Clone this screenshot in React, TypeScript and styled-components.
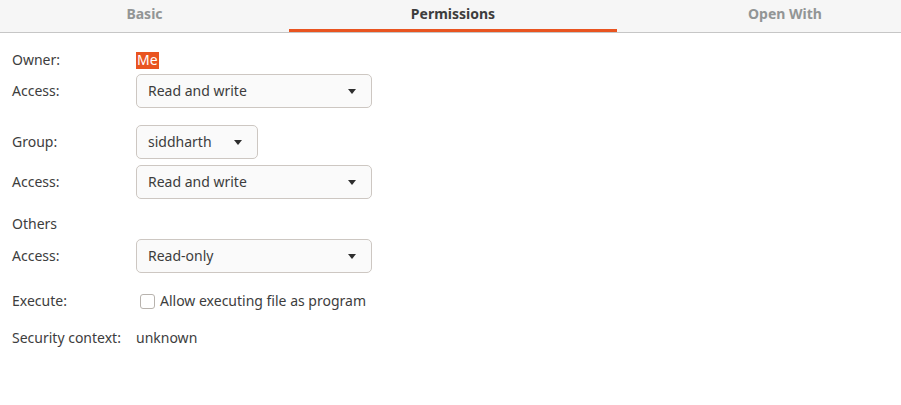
import React from "react";
import styled, { createGlobalStyle } from "styled-components";

const Global = createGlobalStyle`
  html, body { margin: 0; padding: 0; background: #ffffff; }
  body { font-family: "Noto Sans", "Open Sans", sans-serif; font-size: 14px; color: #3d3d3d; }
`;

const Page = styled.div`
  width: 901px;
  height: 405px;
  overflow: hidden;
  background: #ffffff;
`;

const TabBar = styled.div`
  display: flex;
  height: 33px;
  background: #f6f6f6;
  border-bottom: 1px solid #c6c6c6;
  box-sizing: border-box;
  overflow: hidden;
`;

const Tab = styled.div<{ $w: number; $active?: boolean }>`
  flex: 0 0 ${(p) => p.$w}px;
  display: flex;
  align-items: center;
  justify-content: center;
  font-weight: 700;
  font-size: 14px;
  color: ${(p) => (p.$active ? "#3d3d3d" : "#929595")};
  box-shadow: ${(p) => (p.$active ? "inset 0 -3px 0 #e95420" : "none")};
  padding-bottom: 6px;
  box-sizing: border-box;
`;

const Form = styled.div`
  display: flex;
  flex-direction: column;
  padding-left: 12px;
`;

const Row = styled.div<{ $top: number; $h: number }>`
  display: grid;
  grid-template-columns: 124px auto;
  align-items: center;
  margin-top: ${(p) => p.$top}px;
  height: ${(p) => p.$h}px;
`;

const Label = styled.span`
  color: #3d3d3d;
  font-size: 14px;
  margin-top: -1px;
`;

const Value = styled.span`
  color: #3d3d3d;
  font-size: 14px;
`;

const Highlight = styled.span`
  justify-self: start;
  background: #e95420;
  color: #ffffff;
  height: 17px;
  line-height: 16px;
  padding: 0 1px;
`;

const Select = styled.div<{ $w: number }>`
  justify-self: start;
  width: ${(p) => p.$w}px;
  height: 34px;
  box-sizing: border-box;
  border: 1px solid #cdc7c2;
  border-radius: 5px;
  background: #fafafa;
  display: flex;
  align-items: center;
  justify-content: space-between;
  padding: 0 15px 1px 11px;
  color: #3d3d3d;
`;

const Arrow = styled.span`
  width: 0;
  height: 0;
  border-left: 4.5px solid transparent;
  border-right: 4.5px solid transparent;
  border-top: 5px solid #2e2e2e;
  margin-top: 1px;
`;

const CheckWrap = styled.label`
  display: flex;
  align-items: center;
  gap: 5px;
  padding-left: 4px;
`;

const Box = styled.span`
  width: 15px;
  height: 15px;
  box-sizing: border-box;
  border: 1px solid #b8b3ae;
  border-radius: 3px;
  background: #ffffff;
  margin-top: 1px;
`;

export default function App() {
  return (
    <Page>
      <Global />
      <TabBar>
        <Tab $w={289}>Basic</Tab>
        <Tab $w={328} $active>
          Permissions
        </Tab>
        <Tab $w={336}>Open With</Tab>
      </TabBar>
      <Form>
        <Row $top={18} $h={17}>
          <Label>Owner:</Label>
          <Highlight>Me</Highlight>
        </Row>
        <Row $top={6} $h={34}>
          <Label>Access:</Label>
          <Select $w={236}>
            <span>Read and write</span>
            <Arrow />
          </Select>
        </Row>
        <Row $top={17} $h={34}>
          <Label>Group:</Label>
          <Select $w={122}>
            <span>siddharth</span>
            <Arrow />
          </Select>
        </Row>
        <Row $top={6} $h={34}>
          <Label>Access:</Label>
          <Select $w={236}>
            <span>Read and write</span>
            <Arrow />
          </Select>
        </Row>
        <Row $top={16} $h={18}>
          <Label>Others</Label>
          <span />
        </Row>
        <Row $top={6} $h={34}>
          <Label>Access:</Label>
          <Select $w={236}>
            <span>Read-only</span>
            <Arrow />
          </Select>
        </Row>
        <Row $top={18} $h={18}>
          <Label>Execute:</Label>
          <CheckWrap>
            <Box />
            <Value>Allow executing file as program</Value>
          </CheckWrap>
        </Row>
        <Row $top={19} $h={18}>
          <Label>Security context:</Label>
          <Value>unknown</Value>
        </Row>
      </Form>
    </Page>
  );
}
